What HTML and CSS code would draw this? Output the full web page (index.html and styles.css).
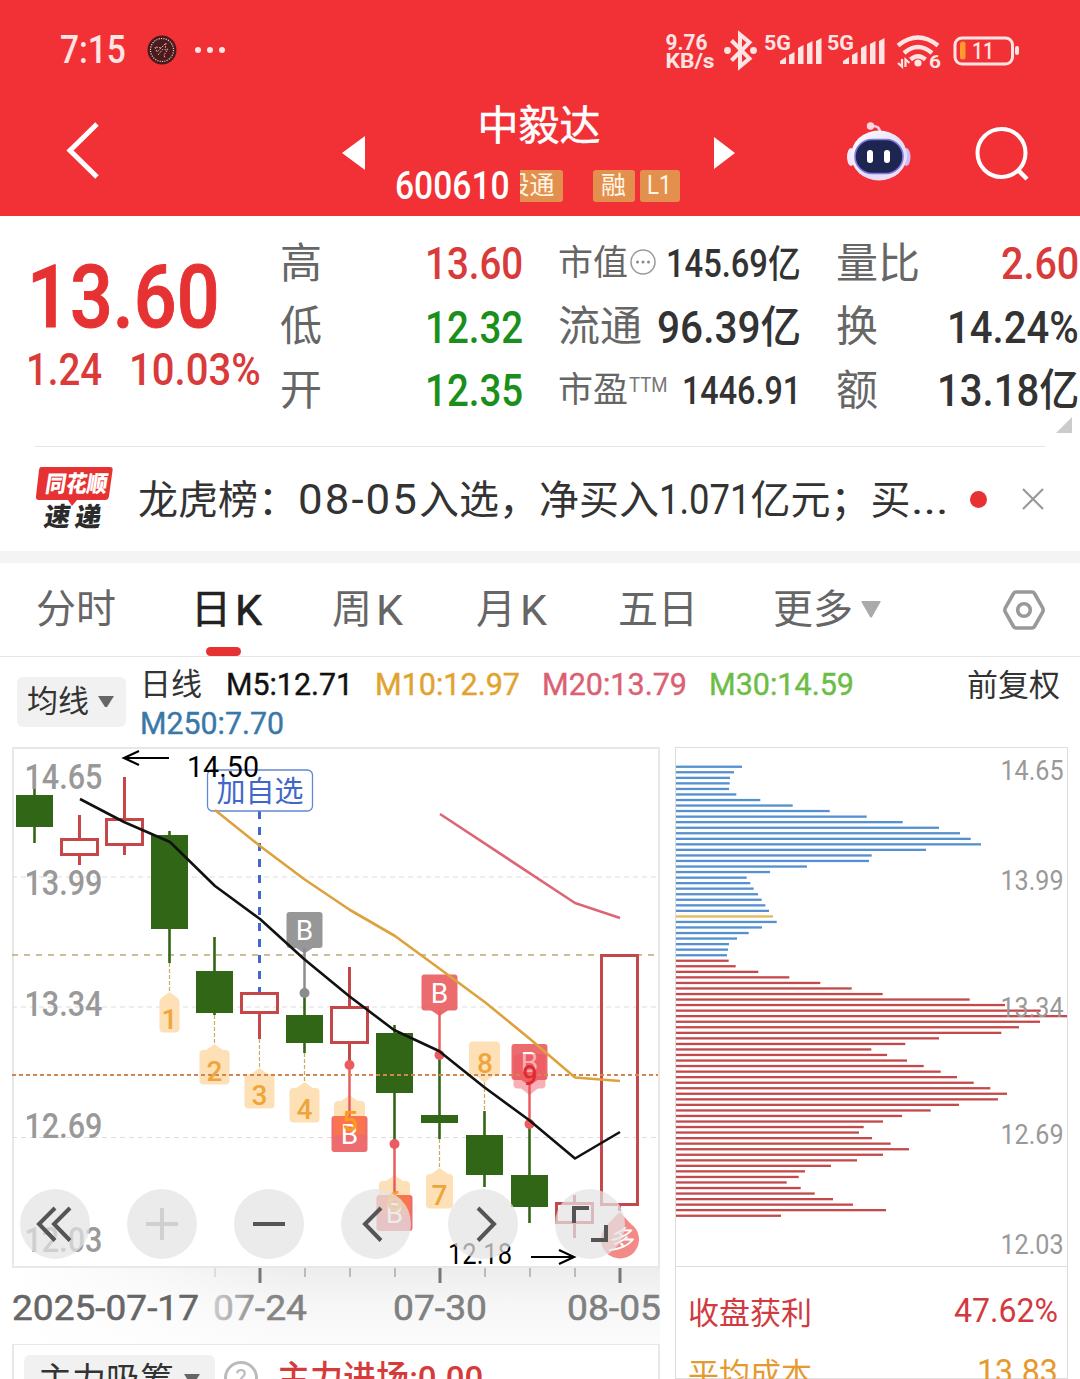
FILE: index.html
```html
<!DOCTYPE html>
<html lang="zh-CN">
<head>
  <meta charset="UTF-8" />
  <meta name="viewport" content="width=device-width, initial-scale=1.0"/>
  <title>中毅达 600610</title>
  <link rel="stylesheet" href="styles.css">
</head>
<body>

  <div class="header">
    <div class="status">
      <span class="clock" data-w="66">7:15</span>
      <svg class="coin" width="30" height="30" viewBox="0 0 30 30">
        <circle cx="15" cy="15" r="14.5" fill="#4a1a1c"/>
        <circle cx="15" cy="15" r="11.5" fill="none" stroke="#e9c9c6" stroke-width="1.2" stroke-dasharray="1.2 1.2"/>
        <path d="M8 12l2 5 3-3 6-6-1 7 3-1-4 6 1 3M11 20l5-6M9 12l5 1 5-5" fill="none" stroke="#cfa6a3" stroke-width="1" stroke-dasharray="2 1"/>
      </svg>
      <span class="dots"><i></i><i></i><i></i></span>
      <svg class="signals" width="364" height="50" viewBox="660 24 364 50">
        <g fill="#ffe4e4" font-family="Roboto, sans-serif" font-weight="700">
          <text x="665.500" y="48.500" font-size="22.500" textLength="42" lengthAdjust="spacingAndGlyphs">9.76</text>
          <text x="665.500" y="67" font-size="21" textLength="49" lengthAdjust="spacingAndGlyphs">KB/s</text>
          <text x="764" y="48.500" font-size="21" textLength="27" lengthAdjust="spacingAndGlyphs">5G</text>
          <text x="827" y="48.500" font-size="21" textLength="27" lengthAdjust="spacingAndGlyphs">5G</text>
          <text x="929" y="67" font-size="18" textLength="12" lengthAdjust="spacingAndGlyphs">6</text>
          <path id="bars" d="M780 63v-3l6-4v7zM789 63v-9l5.500-3v12zM798 63V47l5.500-3v19zM807 63V43l5.500-3v23zM816 63V40l5.500-3v26z"/>
          <use href="#bars" x="63"/>
          <circle cx="727.500" cy="49.500" r="3.400"/>
          <circle cx="753.500" cy="49.500" r="3.400"/>
          <circle cx="918" cy="62" r="3.600"/>
          <rect x="1015" y="45" width="4" height="9" rx="2"/>
        </g>
        <path d="M731.500 39.500l18 18-9.500 8V33.500l9.500 8-18 18" fill="none" stroke="#ffe4e4" stroke-width="4"/>
        <g fill="none" stroke="#ffe4e4" stroke-width="4.400">
          <path d="M898 44.500q20-16 40 0M904 52q14-12 28 0M910.500 58.500q7.500-6.500 15 0"/>
          <path d="M898 62l4 3.500V58M909.500 62l-4-3.500V66" stroke-width="2.200"/>
          <rect x="955" y="37" width="57.500" height="26" rx="7" stroke-width="3"/>
        </g>
        <rect x="960" y="40.500" width="5.500" height="18" rx="2.500" fill="#ff9a2e"/>
        <text x="972" y="58" font-family="Roboto, sans-serif" font-size="23" font-weight="500" fill="#ffe4e4" textLength="22" lengthAdjust="spacingAndGlyphs">11</text>
      </svg>
    </div>

    <div class="titlebar">
      <svg class="back" width="36" height="60" viewBox="0 0 36 60"><path d="M32 3L5 29.500 32 56" fill="none" stroke="#fff" stroke-width="5"/></svg>
      <svg class="prev" width="24" height="36" viewBox="0 0 24 36"><path d="M23 1v34L0 18z" fill="#fff"/></svg>
      <div class="stock">
        <div class="name">中毅达</div>
        <div class="code-row">
          <span class="code" data-w="115">600610</span>
          <span class="tag cut"><b>股通</b></span>
          <span class="tag rong">融</span>
          <span class="tag"><i data-w="25">L1</i></span>
        </div>
      </div>
      <svg class="next" width="22" height="32" viewBox="0 0 22 32"><path d="M0 0v32l21-16z" fill="#fff"/></svg>
      <svg class="robot" width="64" height="60" viewBox="0 0 64 60">
        <defs>
          <linearGradient id="shell" x1="0" y1="0" x2="1" y2="1">
            <stop offset="0" stop-color="#fff"/><stop offset=".6" stop-color="#e3ddfa"/><stop offset="1" stop-color="#f7dff0"/>
          </linearGradient>
        </defs>
        <path d="M24 5q9-1 9 7" fill="none" stroke="#f4d0e8" stroke-width="2.500"/>
        <circle cx="23.500" cy="5" r="3.700" fill="#fbd5e2"/>
        <ellipse cx="4" cy="36" rx="4" ry="9" fill="#efe8ff"/>
        <ellipse cx="59.500" cy="36" rx="4" ry="9" fill="#cdbdf5"/>
        <ellipse cx="32" cy="34.500" rx="28" ry="25" fill="url(#shell)"/>
        <rect x="8" y="18.500" width="48" height="34" rx="17" fill="#1c2650" stroke="#7c78dc" stroke-width="1.600"/>
        <rect x="20" y="29" width="6" height="13" rx="3" fill="#fff"/>
        <rect x="37" y="29" width="6" height="13" rx="3" fill="#fff"/>
      </svg>
      <svg class="search" width="56" height="56" viewBox="0 0 56 56"><circle cx="26.500" cy="27" r="24" fill="none" stroke="#fff" stroke-width="4"/><path d="M43 44l9 9" stroke="#fff" stroke-width="4.500"/></svg>
    </div>
  </div>

  <div class="quote">
    <div class="price">
      <div class="last"><span data-w="193">13.60</span></div>
      <div class="change"><span data-w="76">1.24</span><span data-w="132">10.03%</span></div>
    </div>
    <div class="col hl">
      <div class="row"><label>高</label><span class="red" data-w="98">13.60</span></div>
      <div class="row"><label>低</label><span class="green" data-w="98">12.32</span></div>
      <div class="row"><label>开</label><span class="green" data-w="98">12.35</span></div>
    </div>
    <div class="col cap">
      <div class="row small"><label>市值</label>
        <svg class="more" width="28" height="28" viewBox="0 0 28 28"><circle cx="14" cy="14" r="12" fill="none" stroke="#999" stroke-width="1.500"/><g fill="#888"><circle cx="8.500" cy="14" r="1.500"/><circle cx="14" cy="14" r="1.500"/><circle cx="19.500" cy="14" r="1.500"/></g></svg>
        <span data-w="135">145.69亿</span></div>
      <div class="row"><label>流通</label><span data-w="144">96.39亿</span></div>
      <div class="row small"><label>市盈</label><sup data-w="39">TTM</sup><span data-w="119">1446.91</span></div>
    </div>
    <div class="col ratio">
      <div class="row"><label>量比</label><span class="red" data-w="78">2.60</span></div>
      <div class="row"><label>换</label><span data-w="132">14.24%</span></div>
      <div class="row"><label>额</label><span data-w="142">13.18亿</span></div>
    </div>
    <i class="corner"></i>
  </div>

  <div class="news">
    <svg class="news-logo" width="80" height="68" viewBox="0 0 80 68">
      <path d="M6 3h69q3 0 2.600 3L74 32q-.5 4-4 4H42l-5 6-4-6H4q-3.500 0-3-4L4 6q.4-3 2-3z" fill="#e63232"/>
      <g font-family="Noto Sans CJK SC, sans-serif" font-weight="900">
        <text x="9" y="28.500" font-size="23" fill="#fff" textLength="62" lengthAdjust="spacingAndGlyphs" transform="translate(5 0) skewX(-9)">同花顺</text>
        <text x="9" y="62.500" font-size="26" fill="#2b2b2b" textLength="57" transform="translate(9 0) skewX(-9)">速递</text>
      </g>
    </svg>
    <p>龙虎榜：<span class="date" data-w="121">08-05</span>入选，净买入<span class="sum" data-w="92">1.071</span>亿元；买<span data-w="38">...</span></p>
    <i class="dot"></i>
    <svg class="close" width="24" height="24" viewBox="0 0 24 24"><path d="M2 2l20 20M22 2L2 22" stroke="#999" stroke-width="2.200"/></svg>
  </div>

  <div class="tabs">
    <span>分时</span>
    <span class="active">日<em>K</em></span>
    <span>周<em>K</em></span>
    <span>月<em>K</em></span>
    <span>五日</span>
    <span>更多<svg width="20" height="18" viewBox="0 0 20 18"><path d="M1 0h18q1 0 .5 1L11 16q-1 1.500-2 0L.5 1Q0 0 1 0z" fill="#aaa"/></svg></span>
    <svg class="setting" width="44" height="44" viewBox="0 0 44 44"><path d="M14 4h16q1.500 0 2.500 1.500l8 14q1.300 2.500 0 5l-8 14Q31.500 40 30 40H14q-1.500 0-2.500-1.500l-8-14q-1.300-2.500 0-5l8-14Q12.500 4 14 4z" fill="none" stroke="#999" stroke-width="3.600"/><circle cx="22" cy="22" r="6.300" fill="none" stroke="#999" stroke-width="3.600"/></svg>
  </div>

  <div class="legend">
    <div class="select">均线<svg width="16" height="12" viewBox="0 0 16 12"><path d="M0 0h16L9 11H7z" fill="#666"/></svg></div>
    <div class="averages">
      <span class="day">日线</span>
      <span class="m5" data-w="127">M5:12.71</span>
      <span class="m10" data-w="145">M10:12.97</span>
      <span class="m20" data-w="145">M20:13.79</span>
      <span class="m30" data-w="145">M30:14.59</span>
      <span class="m250" data-w="144">M250:7.70</span>
    </div>
    <span class="adjust">前复权</span>
  </div>

  <div class="charts">
    <div class="kline">
      <svg id="kline" width="668" height="600" viewBox="0 744 668 600"></svg>
      <div class="tools">
        <button><svg viewBox="0 0 70 70"><path d="M35 19L19 35l16 16.500M50 19L34 35l16 16.500"/></svg></button>
        <button class="off"><svg viewBox="0 0 70 70"><path d="M19 35h32M35 19v32"/></svg></button>
        <button><svg viewBox="0 0 70 70"><path d="M19 35h32"/></svg></button>
        <button><svg viewBox="0 0 70 70"><path d="M40 19L24 35l16 16.500"/></svg></button>
        <button><svg viewBox="0 0 70 70"><path d="M30 19l16 16-16 16.500"/></svg></button>
        <button><svg viewBox="0 0 70 70"><path d="M19 34V19h15M36 51h15V36"/></svg></button>
      </div>
      <div class="indicator">
        <div class="select"><span>主力吸筹</span><svg width="16" height="12" viewBox="0 0 16 12"><path d="M0 0h16L9 11H7z" fill="#666"/></svg></div>
        <span class="help">?</span>
        <span class="enter" data-w="206">主力进场:0.00</span>
      </div>
    </div>
    <div class="chips">
      <svg id="chips" width="391" height="518" viewBox="676 748 391 518"></svg>
      <div class="line profit"><span>收盘获利</span><span data-w="104">47.62%</span></div>
      <div class="line cost"><span>平均成本</span><span data-w="81">13.83</span></div>
    </div>
  </div>

  <script src="app.js"></script>
</body>
</html>
```
FILE: styles.css
```css
* {
  margin: 0;
  padding: 0;
  box-sizing: border-box;
}

body {
  width: 1080px;
  height: 1379px;
  overflow: hidden;
  background: #fff;
  color: #333;
  font-family: Roboto, "Noto Sans CJK SC", sans-serif;
}

svg {
  display: block;
  flex: none;
}

i, em {
  font-style: normal;
}

[data-w] {
  display: inline-block;
  white-space: nowrap;
  transform-origin: 0 50%;
}

/* header */
.header {
  height: 216px;
  background: #f23136;
  color: #fff;
}

.status {
  height: 100px;
  padding: 0 56px 0 60px;
  display: flex;
  align-items: center;
}

.clock {
  font-size: 38px;
  font-weight: 500;
  line-height: 50px;
  color: #ffe4e4;
}

.coin {
  margin-left: 21px;
}

.dots {
  display: flex;
  gap: 6px;
  margin-left: 18px;
}

.dots i {
  width: 6px;
  height: 6px;
  border-radius: 50%;
  background: #ffe4e4;
}

.signals {
  margin-left: auto;
}

.titlebar {
  height: 116px;
  display: flex;
  align-items: flex-start;
}

.back {
  margin: 21px 0 0 65px;
}

.prev {
  margin: 35px 0 0 241px;
}

.stock {
  width: 288px;
  margin-left: 29px;
}

.name {
  height: 54px;
  text-align: center;
  font-size: 41px;
  line-height: 53px;
  -webkit-text-stroke: .5px #fff;
}

.code-row {
  height: 64px;
  display: flex;
  align-items: center;
}

.code {
  font-size: 38px;
  font-weight: 500;
}

.tag {
  width: 40px;
  height: 32px;
  margin-left: 5px;
  border-radius: 3px;
  background: #e38f4d;
  color: #fff6e4;
  font-size: 25px;
  line-height: 32px;
  text-align: center;
}

.tag.cut {
  width: 43px;
  margin-left: 10px;
  padding-right: 8px;
  border-radius: 0 3px 3px 0;
  overflow: hidden;
  display: flex;
  justify-content: flex-end;
}

.tag b {
  font-weight: 400;
  white-space: nowrap;
}

.tag.rong {
  width: 42px;
  margin-left: 30px;
}

.next {
  margin: 37px 0 0 31px;
}

.robot {
  margin: 21px 0 0 111px;
}

.search {
  margin: 26px 0 0 64px;
}

/* quote */
.quote {
  position: relative;
  height: 231px;
  padding-top: 17px;
  display: flex;
}

.quote::after {
  content: "";
  position: absolute;
  left: 35px;
  right: 35px;
  bottom: 0;
  height: 1px;
  background: #e6e6e6;
}

.price {
  width: 281px;
  color: #e63232;
}

.last {
  height: 110px;
  padding: 18px 0 0 27px;
  font-size: 88px;
  font-weight: 500;
  line-height: 92px;
  -webkit-text-stroke: 1px #e63232;
}

.change {
  display: flex;
  gap: 27px;
  padding-left: 26px;
  font-size: 44px;
  font-weight: 500;
  line-height: 54px;
  color: #d93a3a;
}

.col {
  font-size: 44px;
  font-weight: 500;
}

.hl {
  width: 242px;
}

.cap {
  width: 242px;
  margin-left: 36px;
}

.ratio {
  width: 242px;
  margin-left: 36px;
}

.row {
  height: 63.500px;
  display: flex;
  align-items: center;
  line-height: 63px;
}

.row label {
  margin: -3px auto 0 -1px;
  color: #666;
  font-size: 42px;
  font-weight: 400;
  white-space: nowrap;
}

.row.small {
  font-size: 38px;
}

.row.small label {
  margin-right: 1px;
  font-size: 35px;
}

.row.small > span {
  margin-left: auto;
}

.row .more {
  margin-top: -5px;
}

.row sup {
  align-self: flex-start;
  margin-top: -6px;
  font-size: 21px;
  font-weight: 400;
  color: #777;
}

.red {
  color: #d93a3a;
}

.green {
  color: #1b8f1b;
}

.corner {
  position: absolute;
  right: 8px;
  bottom: 14px;
  border-left: 16px solid transparent;
  border-bottom: 16px solid #ccc;
}

/* news */
.news {
  height: 116px;
  padding: 0 35px;
  border-bottom: 12px solid #f4f4f4;
  display: flex;
  align-items: center;
}

.news-logo {
  margin-top: -2px;
}

.news p {
  width: 813px;
  margin: 2px 0 0 23px;
  font-size: 40px;
  line-height: 60px;
  white-space: nowrap;
}

.news .date {
  font-size: 42px;
  letter-spacing: 2px;
}

.news .sum {
  font-size: 42px;
}

.news .dot {
  width: 17px;
  height: 17px;
  margin-left: 19px;
  border-radius: 50%;
  background: #e63232;
}

.news .close {
  margin-left: 34px;
}

/* tabs */
.tabs {
  height: 94px;
  padding: 0 34px 0 36px;
  border-bottom: 1px solid #e6e6e6;
  display: flex;
  align-items: center;
  font-size: 40px;
  line-height: 94px;
  color: #666;
}

.tabs span {
  position: relative;
  width: 80px;
  margin-right: 75px;
  display: flex;
  align-items: center;
  white-space: nowrap;
}

.tabs em {
  margin-left: 4px;
  font-size: 43px;
}

.tabs .active {
  width: 71px;
  margin-right: 70px;
  color: #222;
  -webkit-text-stroke: .6px #222;
}

.tabs .active::after {
  content: "";
  position: absolute;
  left: 15px;
  bottom: 1px;
  width: 35px;
  height: 9px;
  border-radius: 5px;
  background: #e63232;
}

.tabs span:nth-child(3) {
  width: 72px;
  margin-right: 72px;
}

.tabs span:nth-child(4) {
  width: 72px;
  margin-right: 70px;
}

.tabs span:nth-child(6) {
  width: 110px;
  margin-right: 0;
}

.tabs span svg {
  margin-left: 8px;
}

.setting {
  margin-left: auto;
}

/* legend */
.legend {
  height: 90px;
  padding: 8px 20px 0 17px;
  display: flex;
  align-items: flex-start;
}

.select {
  height: 50px;
  padding: 0 11px 0 10px;
  border-radius: 6px;
  background: #f1f1f1;
  display: flex;
  align-items: center;
  gap: 9px;
  font-size: 31px;
  line-height: 52px;
}

.legend .select {
  width: 109px;
  margin-top: 12px;
}

.averages {
  width: 760px;
  margin-left: 14px;
  display: flex;
  flex-wrap: wrap;
  column-gap: 22px;
  font-size: 32px;
  font-weight: 400;
  line-height: 39px;
  -webkit-text-stroke: .4px;
}

.day {
  width: 64px;
  font-size: 31px;
  -webkit-text-stroke: 0;
}

.m5 {
  color: #111;
}

.m10 {
  color: #e2a22e;
}

.m20 {
  color: #db6072;
}

.m30 {
  color: #6cbd45;
}

.m250 {
  color: #3a78a8;
}

.adjust {
  margin-left: auto;
  font-size: 31px;
  line-height: 41px;
}

/* charts */
.charts {
  height: 632px;
  display: flex;
}

.kline {
  position: relative;
  width: 675px;
  margin-top: -3px;
}

.tools {
  position: absolute;
  left: 20px;
  top: 445px;
  display: flex;
  gap: 37px;
}

.tools button {
  width: 70px;
  height: 70px;
  border: 0;
  border-radius: 50%;
  background: rgba(228, 228, 228, .73);
}

.tools path {
  fill: none;
  stroke: #555;
  stroke-width: 4;
}

.tools .off path {
  stroke: #d0d0d0;
}

.indicator {
  width: 648px;
  height: 80px;
  margin: -1px 0 0 12px;
  padding: 10px;
  border: 2px solid #e8e8e8;
  display: flex;
}

.indicator .select {
  width: 191px;
  padding-left: 14px;
  gap: 10px;
  font-size: 34px;
  line-height: 45px;
  white-space: nowrap;
}

.help {
  width: 34px;
  height: 34px;
  margin: 6px 20px 0 9px;
  border: 3px solid #bbb;
  border-radius: 50%;
  color: #bbb;
  font-size: 24px;
  line-height: 29px;
  text-align: center;
}

.enter {
  margin-left: -1px;
  font-size: 34px;
  font-weight: 500;
  line-height: 46px;
  color: #d43c3c;
}

.chips {
  width: 393px;
  border: 1px solid #ddd;
}

.chips svg {
  margin-bottom: 14px;
  box-shadow: 0 1px 0 #ddd;
}

.line {
  height: 61px;
  padding: 0 9px 0 12px;
  display: flex;
  align-items: center;
  justify-content: space-between;
  font-size: 31px;
}

.line [data-w] {
  font-size: 33px;
}

.profit {
  color: #d33a40;
}

.cost {
  color: #e59a30;
}
```
FILE: app.js
```js
// squeeze the figures into their column width
document.querySelectorAll('[data-w]').forEach(function (el) {
  const want = Number(el.dataset.w);
  const now = el.offsetWidth;
  el.style.transform = 'scaleX(' + want / now + ')';
  el.style.marginRight = (want - now) + 'px';
});

const X0 = 34.5, STEP = 45;
const RED = '#c4484a', GREEN = '#306615';

// [wick top, body top, body bottom, wick bottom, up]
const candles = [
  [789, 795, 827, 843, 0], [815, 838, 856, 865, 1], [777, 818, 846, 855, 1],
  [831, 835, 929, 963, 0], [937, 971, 1013, 1015, 0], [992, 992, 1014, 1039, 1],
  [993, 1015, 1043, 1053, 0], [967, 1006, 1044, 1065, 1], [1025, 1033, 1093, 1144, 0],
  [1055, 1115, 1123, 1139, 0], [1111, 1135, 1175, 1187, 0], [1124, 1175, 1207, 1223, 0],
  [1195, 1202, 1224, 1238, 1], [954, 954, 1206, 1211, 1]
];

function label(x, y, w, size, color, text, weight) {
  return `<text x="${x}" y="${y}" textLength="${w}" lengthAdjust="spacingAndGlyphs" font-size="${size}" font-weight="${weight || 400}" fill="${color}">${text}</text>`;
}

function hline(y, color, w, dash) {
  return `<path d="M12 ${y}H658" stroke="${color}" stroke-width="${w}" stroke-dasharray="${dash}"/>`;
}

function tagBox(x, top, half, dir, color) {
  // dir -1: pointer on top, 1: pointer below
  const tip = dir < 0 ? `M${x - 9} ${top + .5}L${x} ${top - 6}L${x + 9} ${top + .5}z` : `M${x - 9} ${top + 34}L${x} ${top + 41}L${x + 9} ${top + 34}z`;
  return `<g fill="${color}"><rect x="${x - half}" y="${top}" width="${half * 2}" height="34.500" rx="4"/><path d="${tip}"/></g>`;
}

function buy(x, top, dotY, color) {
  const below = top < dotY;
  const from = below ? top + 36 : top;
  return `<path d="M${x} ${from}V${dotY}" stroke="${color}" stroke-width="2.500"/><circle cx="${x}" cy="${dotY}" r="5" fill="${color}"/>` +
    `<g opacity=".9"><rect x="${x - 18}" y="${top}" width="36" height="36" rx="3" fill="${color}"/>` +
    (below ? `<path d="M${x - 9} ${top + 35.5}h18l-9 6z" fill="${color}"/>` : '') + '</g>';
}

let s = '<defs><linearGradient id="axis" x1="0" y1="0" x2="0" y2="1"><stop offset="0" stop-color="#ededed"/><stop offset=".5" stop-color="#f7f7f7"/><stop offset="1" stop-color="#fbfbfb"/></linearGradient>' +
  '<linearGradient id="fade"><stop offset="0" stop-color="#fff"/><stop offset=".35" stop-color="#fff" stop-opacity=".6"/><stop offset=".7" stop-color="#fff" stop-opacity="0"/></linearGradient></defs>';
s += '<rect x="12" y="1268" width="648" height="76" fill="url(#axis)"/><rect x="12" y="1268" width="400" height="76" fill="url(#fade)"/>';
s += '<rect x="13" y="748" width="646" height="519" fill="none" stroke="#e8e8e8" stroke-width="2"/>';
[877, 1007, 1137.5].forEach(y => s += hline(y, '#ddd', 1, '5 4'));
s += hline(955, '#bfa67a', 1.6, '6 6');

[['14.65', 789], ['13.99', 895], ['13.34', 1015.5], ['12.69', 1138], ['12.03', 1251.5]].forEach(p => {
  s += label(24.5, p[1], 78, 34.5, '#999', p[0], 500);
});

s += '<path d="M259.500 811V992" stroke="#4169c8" stroke-width="3" stroke-dasharray="8 8"/>';
s += '<rect x="207.500" y="770" width="105" height="41" rx="5" fill="#fff" stroke="#6488d4" stroke-width="1.300"/>';
s += label(216.5, 802, 87, 29, '#4168c8', '加自选');

candles.forEach((c, i) => {
  const x = X0 + STEP * i;
  if (c[4]) {
    s += `<path d="M${x} ${c[0]}V${c[1]}M${x} ${c[2]}V${c[3]}" stroke="${RED}" stroke-width="3"/>`;
    s += `<rect x="${x - 18}" y="${c[1] + 1.5}" width="36" height="${c[2] - c[1] - 3}" fill="none" stroke="${RED}" stroke-width="3"/>`;
  } else {
    s += `<path d="M${x} ${c[0]}V${c[3]}" stroke="${GREEN}" stroke-width="2.600"/>`;
    s += `<rect x="${x - 18.5}" y="${c[1]}" width="37" height="${c[2] - c[1]}" fill="${GREEN}"/>`;
  }
});

// count marks
const PALE = '#fee0b6';
[[169.5, 963, 992], [214.5, 1015, 1044], [259.5, 1039, 1068], [304.5, 1053, 1082], [349.5, 1065, 1095], [394.5, 1144, 1175], [439.5, 1139, 1168], [484.5, 1082, 1111]].forEach(p => {
  s += `<path d="M${p[0]} ${p[1]}V${p[2]}" stroke="#d0a860" stroke-width="1.200" stroke-dasharray="4 2"/>`;
});
s += tagBox(169.5, 998, 10, -1, PALE) + tagBox(214.5, 1050, 15, -1, PALE) + tagBox(259.5, 1074, 15, -1, PALE) +
  tagBox(304.5, 1088, 15, -1, PALE) + tagBox(349.5, 1101, 15.5, -1, PALE) + tagBox(394.5, 1181, 15.5, -1, PALE) +
  tagBox(439.5, 1174, 13.5, -1, PALE) + tagBox(484.5, 1041.5, 15.5, 1, PALE);

// buy marks
const buys = [[304.5, 912, 993, '#8c8c8c'], [439.5, 974.5, 1055, '#ea5c5f'], [349.5, 1116, 1065, '#ea5c5f'],
  [394.5, 1195, 1144, '#ea5c5f'], [529.5, 1044, 1124, '#ea5c5f']];
buys.forEach(p => s += buy(p[0], p[1], p[2], p[3]));
s += '<rect x="334" y="1116" width="31" height="19" fill="#ff7a45" opacity=".75"/><rect x="379" y="1195" width="31" height="20" fill="#ff7a45" opacity=".75"/>';
buys.forEach(p => {
  s += `<text x="${p[0]}" y="${p[1] + 28}" text-anchor="middle" font-size="28" fill="#fff">B</text>`;
});
s += '<g opacity=".45">' + tagBox(529.5, 1054, 16, 1, '#f05060') + '</g>';
s += hline(1075, '#cf8650', 1.8, '4 3');
[['1', 169.5, 1028.5], ['2', 214.5, 1081], ['3', 259.5, 1105], ['4', 304.5, 1119], ['5', 350, 1131], ['6', 394.5, 1211], ['7', 439.5, 1205], ['8', 485, 1073]].forEach(p => {
  s += `<text x="${p[1]}" y="${p[2]}" text-anchor="middle" font-size="28" font-weight="500" fill="${p[0] === '5' || p[0] === '6' ? '#ff9a20' : '#eea63a'}">${p[0]}</text>`;
});
s += '<text x="530" y="1085" text-anchor="middle" font-size="27" font-weight="500" fill="#e02a30">9</text>';
s += '<path d="M608 1224l11.500-12 11.500 12z" fill="#f28a88"/><circle cx="620" cy="1239.500" r="19" fill="#f28a88"/><text x="620" y="1249" text-anchor="middle" font-size="26" font-style="italic" fill="#fff">多</text>';

// moving averages
s += '<g fill="none" stroke-width="2.600" stroke-linejoin="round">' +
  '<path stroke="#111" d="M80 799L124 822 170 842 215 886 260 919 304 959 349 996 394 1030 439 1051 484 1087 529 1120 575 1158.500 620 1132"/>' +
  '<path stroke="#dda23c" d="M215 810L260 846 304 879 350 910 395 936 440 969 486 1003 530 1039 575 1077.500 620 1081"/>' +
  '<path stroke="#dc6675" d="M440 814L575 903 620 918"/></g>';

// high and low of the window
s += label(187, 776.5, 72, 30, '#000', '14.50') + label(448, 1263.5, 64, 30, '#000', '12.18');
s += '<path d="M169 758H124M139 751l-15 7 15 7M531 1257h43M559 1250l15 7-15 7" fill="none" stroke="#000" stroke-width="2.200"/>';

for (let i = 4; i <= 13; i++) {
  const big = i === 5 || i === 9 || i === 13;
  s += `<path d="M${X0 + STEP * i + .5} 1268v${big ? 15 : 9}" stroke="${i === 4 ? '#ddd' : big ? '#777' : '#bbb'}" stroke-width="${big ? 3 : 2}"/>`;
}
s += '<defs><linearGradient id="datefade"><stop offset="0" stop-color="#ccc"/><stop offset=".5" stop-color="#888"/><stop offset="1" stop-color="#808080"/></linearGradient></defs>';
s += '<g stroke-width=".5">';
[[12, 187, '#666', '2025-07-17'], [213, 94, 'url(#datefade)', '07-24'], [393, 94, '#808080', '07-30'], [567, 94, '#808080', '08-05']].forEach(p => {
  s += `<g stroke="${p[2]}">` + label(p[0], 1320, p[1], 34.5, p[2], p[3]) + '</g>';
});
s += '</g>';
document.getElementById('kline').innerHTML = s;

// cost distribution, one bar per price level
const chips = [
  198, 174, 162, 161, 159, 181, 253, 350, 461, 572, 680, 789, 852, 884, 915, 750, 587, 579, 393, 282,
  212, 223, 233, 246, 257, 268, 279, 291, 302, 258, 218, 183, 159, 156, 153,
  158, 179, 247, 340, 433, 527, 620, 881, 987, 1094, 1173, 1092, 1029, 976, 789,
  688, 586, 633, 693, 743, 794, 843, 893, 943, 993, 966, 849, 764, 678, 621, 563, 549, 588, 644, 699,
  621, 543, 465, 387, 368, 332, 374, 416, 471, 531, 630, 315
];
let b = '';
chips.forEach((w, i) => {
  const color = i === 27 ? '#e3b95a' : i < 35 ? '#5591ce' : '#c4494b';
  b += `<rect x="676" y="${(765.6 + i * 5.543).toFixed(1)}" width="${(w / 3).toFixed(1)}" height="2.300" fill="${color}"/>`;
});
[['14.65', 780], ['13.99', 890], ['13.34', 1016.5], ['12.69', 1144], ['12.03', 1254]].forEach(p => {
  b += label(1000.5, p[1], 63, 27.5, '#999', p[0]);
});
document.getElementById('chips').innerHTML = b;
```
